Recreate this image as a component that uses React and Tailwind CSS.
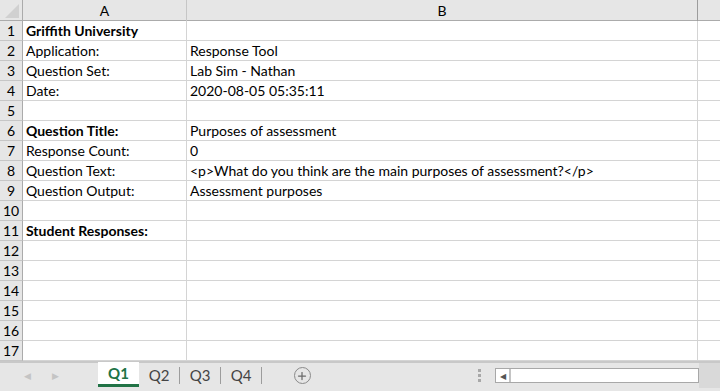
import { Plus } from 'lucide-react';

// Rows of the sheet: [column A, column B, bold]
const rows = [
  ['Griffith University', '', true],
  ['Application:', 'Response Tool'],
  ['Question Set:', 'Lab Sim - Nathan'],
  ['Date:', '2020-08-05 05:35:11'],
  ['', ''],
  ['Question Title:', 'Purposes of assessment', true],
  ['Response Count:', '0'],
  ['Question Text:', '<p>What do you think are the main purposes of assessment?</p>'],
  ['Question Output:', 'Assessment purposes'],
  ['', ''],
  ['Student Responses:', '', true],
  ['', ''],
  ['', ''],
  ['', ''],
  ['', ''],
  ['', ''],
  ['', ''],
];

function App() {
  return (
    <div className="w-[720px] h-[391px] overflow-hidden bg-white flex flex-col text-black" style={{ fontFamily: 'Lato, "Open Sans", sans-serif' }}>
      {/* Sheet grid */}
      <div className="flex-1 overflow-hidden">
        {/* Column headers */}
        <div className="grid grid-cols-[23px_164px_511px_1fr] h-[21px] bg-[#e6e6e6] border-b border-[#ababab] text-[14px]">
          <div className="relative border-r border-[#ababab]">
            <div className="absolute right-[3px] bottom-[3px] w-0 h-0 border-l-[14px] border-l-transparent border-b-[14px] border-b-[#d0d0d0]" />
          </div>
          <div className="flex items-center justify-center border-r border-[#c6c6c6]">A</div>
          <div className="flex items-center justify-center border-r border-[#9c9c9c]">B</div>
          <div />
        </div>

        {rows.map(([a, b, bold], i) => (
          <div key={i} className="grid grid-cols-[23px_164px_511px_1fr] h-[20px] text-[14px] leading-[19px]">
            <div className="bg-[#e6e6e6] border-r border-[#ababab] border-b border-b-[#c6c6c6] text-center">{i + 1}</div>
            <div className={`border-r border-b border-[#d4d4d4] pl-[3px] whitespace-nowrap ${bold ? 'font-bold' : ''}`}>{a}</div>
            <div className="border-r border-b border-[#d4d4d4] pl-[3px] whitespace-nowrap">{b}</div>
            <div className="border-b border-[#d4d4d4]" />
          </div>
        ))}
      </div>

      {/* Sheet tabs and horizontal scroll */}
      <div className="h-[30px] shrink-0 bg-[#e6e6e6] border-t-2 border-[#c8c8c8] flex items-start">
        <div className="w-[98px] h-[25px] flex items-center gap-[21px] pl-[24px] text-[#c4c4c4] text-[9px]">
          <span>◀</span>
          <span>▶</span>
        </div>
        <div className="w-[41px] h-[25px] bg-white border-b-[3px] border-[#217346] flex items-center justify-center text-[15px] font-bold text-[#217346] -mt-px">Q1</div>
        <div className="flex items-center h-[25px] text-[15px] text-[#444]">
          <span className="w-[41px] text-center border-r border-[#9c9c9c] leading-[17px]">Q2</span>
          <span className="w-[41px] text-center border-r border-[#9c9c9c] leading-[17px]">Q3</span>
          <span className="w-[41px] text-center border-r border-[#9c9c9c] leading-[17px]">Q4</span>
        </div>
        <div className="w-[80px] h-[25px] flex items-center justify-center">
          <div className="w-[17px] h-[17px] rounded-full border border-[#8a8a8a] flex items-center justify-center text-[#6a6a6a]">
            <Plus size={12} strokeWidth={2.5} />
          </div>
        </div>
        <div className="flex-1 h-[25px] flex items-center justify-end">
          <div className="flex flex-col gap-[2px] mr-[14px]">
            <div className="w-[3px] h-[3px] bg-[#a8a8a8]" />
            <div className="w-[3px] h-[3px] bg-[#a8a8a8]" />
            <div className="w-[3px] h-[3px] bg-[#a8a8a8]" />
          </div>
          <div className="w-[204px] h-[15px] border border-[#a8a8a8] bg-white flex">
            <div className="w-[15px] h-full border-r-2 border-[#c4c4c4] flex items-center justify-center text-[#555] text-[8px]">◀</div>
          </div>
          <div className="w-[21px] h-[25px] bg-[#d9d9d9]" />
        </div>
      </div>
    </div>
  );
}

export default App;
